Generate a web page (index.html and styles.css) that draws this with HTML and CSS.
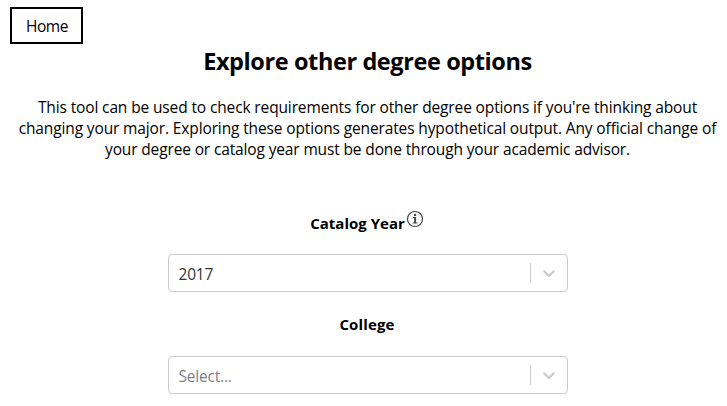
FILE: index.html
```html
<!DOCTYPE html>
<html lang="en">
<head>
<meta charset="utf-8">
<title>Explore other degree options</title>
<link rel="stylesheet" href="styles.css">
</head>
<body>
<a class="home" href="#"><span class="home-text">Home</span></a>
<main>
<h1><span class="title-text">Explore other degree options</span></h1>
<p class="intro"><span class="l1">This tool can be used to check requirements for other degree options if you're thinking about</span> <span class="l2">changing your major. Exploring these options generates hypothetical output. Any official change of</span> <span class="l3">your degree or catalog year must be done through your academic advisor.</span></p>
<section class="field">
<h2><span class="catalog">Catalog Year</span><svg class="info" viewBox="0 0 18 18"><circle cx="9" cy="9" r="7.5"/><path d="M7 7.5h2v5.3M6.6 13h4.8"/><path class="stem" d="M9.2 7v6"/><circle class="dot" cx="9.1" cy="4.9" r="1.2"/></svg></h2>
<div class="select"><span class="value">2017</span><span class="divider"></span><svg class="chevron" viewBox="0 0 20 20"><path d="M4.516 7.548c0.436-0.446 1.043-0.481 1.576 0l3.908 3.747 3.908-3.747c0.533-0.481 1.141-0.446 1.574 0 0.436 0.445 0.408 1.197 0 1.615-0.406 0.418-4.695 4.502-4.695 4.502-0.217 0.223-0.502 0.335-0.787 0.335s-0.57-0.112-0.789-0.335c0 0-4.287-4.084-4.695-4.502s-0.436-1.17 0-1.615z"/></svg></div>
</section>
<section class="field">
<h2><span class="college">College</span></h2>
<div class="select"><span class="value placeholder">Select...</span><span class="divider"></span><svg class="chevron" viewBox="0 0 20 20"><path d="M4.516 7.548c0.436-0.446 1.043-0.481 1.576 0l3.908 3.747 3.908-3.747c0.533-0.481 1.141-0.446 1.574 0 0.436 0.445 0.408 1.197 0 1.615-0.406 0.418-4.695 4.502-4.695 4.502-0.217 0.223-0.502 0.335-0.787 0.335s-0.57-0.112-0.789-0.335c0 0-4.287-4.084-4.695-4.502s-0.436-1.17 0-1.615z"/></svg></div>
</section>
</main>
</body>
</html>
```
FILE: styles.css
```css
* { box-sizing: border-box; }
body { margin: 0; padding: 7px 0 0; background: #fff; color: #000; font: 15.5px/21px "Segoe UI", "Open Sans", "Noto Sans", sans-serif; overflow: hidden; }
span { white-space: nowrap; }
.home { display: flex; align-items: center; justify-content: center; width: 73px; height: 37px; padding: 2px 0 0 1px; margin-left: 10px; border: 2px solid #000; color: #000; text-decoration: none; }
.home-text { letter-spacing: -.4px; }
main { display: flex; flex-direction: column; align-items: center; margin-left: 8px; }
h1 { margin: 1px 0 0; font-size: 23.5px; line-height: 32px; font-weight: 700; }
.title-text { letter-spacing: -.4px; }
.intro { display: flex; flex-direction: column; align-items: center; margin: 20px 0 53px; }
.l1, .l2 { letter-spacing: -.13px; }
.l3 { letter-spacing: -.14px; }
.field { width: 400px; }
.field + .field { margin-top: 22px; }
h2 { display: flex; justify-content: center; align-items: center; margin: 0 0 20px; height: 21px; font-size: 15px; line-height: 21px; font-weight: 700; }
.field + .field h2 { margin-bottom: 21px; }
.college { letter-spacing: .15px; margin-right: 1px; }
.info { width: 18px; height: 18px; margin: -10px 1px 0 1px; fill: none; stroke: #444; stroke-width: 1.2; }
.info .stem { stroke-width: 1.8; }
.info .dot { fill: #444; stroke: none; }
.select { display: flex; align-items: center; width: 400px; height: 38px; border: 1px solid #ccc; border-radius: 4px; }
.value { flex: 1; padding: 3px 0 0 10px; color: #333; letter-spacing: -.2px; }
.placeholder { color: #808080; }
.divider { width: 1px; height: 20px; background: #ccc; }
.chevron { width: 20px; height: 20px; margin: 0 8px; fill: #ccc; }
```
